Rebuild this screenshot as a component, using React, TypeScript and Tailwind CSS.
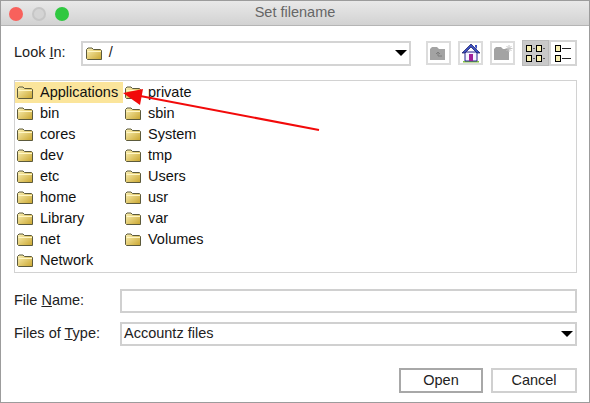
const leftCol = ['Applications', 'bin', 'cores', 'dev', 'etc', 'home', 'Library', 'net', 'Network']
const rightCol = ['private', 'sbin', 'System', 'tmp', 'Users', 'usr', 'var', 'Volumes']

function Folder() {
  return (
    <svg width="16" height="13" viewBox="0 0 16 13" className="shrink-0">
      <defs>
        <linearGradient id="fld" x1="0" y1="0" x2="1" y2="1">
          <stop offset="0" stopColor="#fdf3b8" />
          <stop offset="1" stopColor="#c9a52e" />
        </linearGradient>
      </defs>
      <path d="M0.5 11.5V2.5L2 1H6L7.5 2.5H14.5L15.5 3.5V12.5H1.5Z" fill="url(#fld)" stroke="#5c5a3c" />
      <path d="M1.5 4.5H15" stroke="#fff6c4" />
    </svg>
  )
}

function Caret() {
  return (
    <svg width="12" height="6" viewBox="0 0 12 6">
      <path d="M0 0H12L6 6Z" fill="#000" />
    </svg>
  )
}

function FileRow({ name, active }: { name: string; active?: boolean }) {
  return (
    <div className={`flex h-[21px] items-center pl-[2px] ${active ? 'bg-[#fbe59b]' : ''}`}>
      <Folder />
      <span className="ml-[7px] text-[14.5px] text-[#111]">{name}</span>
    </div>
  )
}

function ToolButton({ children }: { children: React.ReactNode }) {
  return (
    <div className="flex h-[24px] w-[25px] items-center justify-center border-2 border-[#dcdcdc] bg-white">
      {children}
    </div>
  )
}

function GreyFolder({ star }: { star?: boolean }) {
  return (
    <svg width="20" height="16" viewBox="0 0 20 16">
      <path d="M1 15V4L3 2H8L10 4H16V15Z" fill="#a3a3a3" />
      {star ? (
        <path d="M16 0V7M12.5 3.5H19.5M13.5 1L18.5 6M18.5 1L13.5 6" stroke="#c4c4c4" />
      ) : (
        <path d="M7 9L9 7L11 9M9 7V11H13" fill="none" stroke="#7c7c7c" />
      )}
    </svg>
  )
}

function Home() {
  return (
    <svg width="20" height="20" viewBox="0 0 20 20">
      <path d="M2 18H18V19.5H2Z" fill="#7fbf3f" />
      <path d="M4 9H16V18H4Z" fill="#f4f4ff" stroke="#23238e" />
      <path d="M10 1L1 10H4L10 4L16 10H19Z" fill="#3a4fc0" stroke="#15155f" strokeWidth="0.7" />
      <path d="M14 2H16V6L14 4Z" fill="#3a4fc0" />
      <path d="M8 11H12V18H8Z" fill="#a0209a" />
    </svg>
  )
}

function ViewIcon({ details }: { details?: boolean }) {
  const box = 'h-[7px] w-[6px] border border-black bg-[#f7eeb0]'
  if (details) {
    return (
      <div className="flex flex-col gap-[3px]">
        {[0, 1].map((i) => (
          <div key={i} className="flex items-center gap-[1px]">
            <div className={box} />
            <div className="h-px w-[9px] bg-[#222]" />
          </div>
        ))}
      </div>
    )
  }
  return (
    <div className="grid grid-cols-2 gap-x-[1px] gap-y-[3px]">
      {[0, 1, 2, 3].map((i) => (
        <div key={i} className="flex items-center gap-[1px]">
          <div className={box} />
          <div className="h-px w-[2px] bg-[#555]" />
        </div>
      ))}
    </div>
  )
}

export default function App() {
  return (
    <div className="relative flex h-[403px] w-[590px] flex-col overflow-hidden border border-[#9c9c9c] bg-white font-['Liberation_Sans',sans-serif] text-[#222]">
      <div className="relative flex h-[25px] shrink-0 items-center justify-center border-b border-[#b5b5b5] bg-gradient-to-b from-[#e9e9e9] to-[#d2d2d2]">
        <div className="absolute left-[8px] top-[6px] flex gap-[9px]">
          <div className="h-[14px] w-[14px] rounded-full bg-[#f8615c]" />
          <div className="h-[14px] w-[14px] rounded-full border-2 border-[#c6c6c6] bg-[#d4d4d4]" />
          <div className="h-[14px] w-[14px] rounded-full bg-[#2fc840]" />
        </div>
        <span className="text-[14.5px] text-[#666]">Set filename</span>
      </div>

      <div className="flex flex-1 flex-col pl-[13px] pr-[12px]">
        <div className="mt-[14px] flex h-[26px] items-center">
          <span className="w-[67px] text-[14.5px]">
            Look <span className="underline">I</span>n:
          </span>
          <div className="flex h-[25px] w-[331px] items-center border-2 border-[#d4d4d4] pl-[3px] pr-[2px]">
            <Folder />
            <span className="ml-[7px] text-[14.5px]">/</span>
            <div className="ml-auto flex">
              <Caret />
            </div>
          </div>
          <div className="ml-[15px] flex gap-[7px]">
            <ToolButton><GreyFolder /></ToolButton>
            <ToolButton><Home /></ToolButton>
            <ToolButton><GreyFolder star /></ToolButton>
          </div>
          <div className="ml-[7px] flex">
            <div className="flex h-[26px] w-[27px] items-center justify-center border border-[#b9b9b9] bg-[#c9c9c9]">
              <ViewIcon />
            </div>
            <div className="flex h-[26px] w-[28px] items-center justify-center border-2 border-[#d4d4d4] bg-white">
              <ViewIcon details />
            </div>
          </div>
        </div>

        <div className="mt-[14px] flex h-[193px] w-[563px] border border-[#d2d2d2] pt-[1px]">
          <div className="flex w-[108px] flex-col">
            {leftCol.map((n, i) => (
              <FileRow key={n} name={n} active={i === 0} />
            ))}
          </div>
          <div className="flex flex-col">
            {rightCol.map((n) => (
              <FileRow key={n} name={n} />
            ))}
          </div>
        </div>

        <div className="mt-[16px] flex h-[24px] items-center">
          <span className="w-[106px] text-[14.5px]">
            File <span className="underline">N</span>ame:
          </span>
          <div className="h-[24px] w-[457px] border-2 border-[#d0d0d0]" />
        </div>
        <div className="mt-[9px] flex h-[24px] items-center">
          <span className="w-[106px] text-[14.5px]">
            Files of <span className="underline">T</span>ype:
          </span>
          <div className="flex h-[24px] w-[457px] items-center border-2 border-[#d0d0d0] pl-[2px] pr-[2px]">
            <span className="text-[14.5px]">Accountz files</span>
            <div className="ml-auto flex">
              <Caret />
            </div>
          </div>
        </div>

        <div className="mt-[22px] flex justify-end gap-[8px]">
          <button className="h-[25px] w-[84px] border-2 border-[#a8a8a8] bg-white text-[14.5px]">Open</button>
          <button className="h-[25px] w-[86px] border-2 border-[#d0d0d0] bg-white text-[14.5px]">Cancel</button>
        </div>
      </div>

      <svg width="590" height="403" className="pointer-events-none absolute left-[-1px] top-[-1px]">
        <path d="M319 130L135 95" stroke="#f20a0a" strokeWidth="2" />
        <path d="M123 93L143 89L140 105Z" fill="#f20a0a" />
      </svg>
    </div>
  )
}
